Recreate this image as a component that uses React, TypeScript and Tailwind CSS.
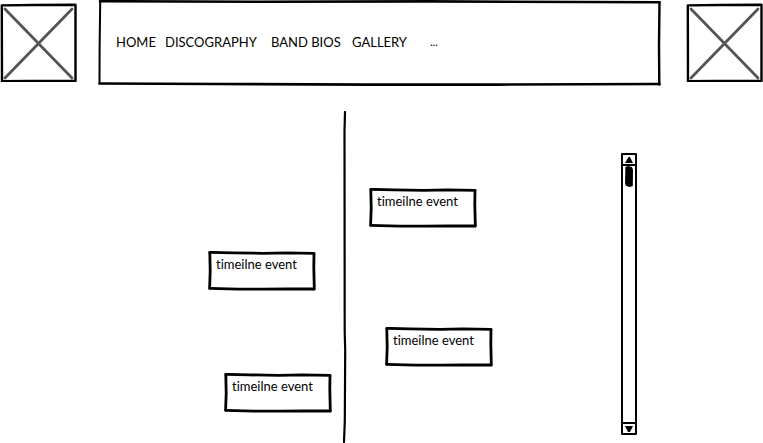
import React from "react";

const navItems = [
  { label: "HOME", style: "w-[37px] text-[13px]" },
  { label: "DISCOGRAPHY", style: "w-[94px] text-[13px]" },
  { label: "BAND BIOS", style: "w-[69px] text-[13px]" },
  { label: "GALLERY", style: "w-[66px] text-[13px]" },
  { label: "...", style: "w-3 text-[11px]" },
];

function ImagePlaceholder({ label }: { label: string }) {
  return (
    <svg role="img" aria-label={label} viewBox="0 0 77 80" className="h-20 w-[77px] shrink-0" fill="none">
      <path d="M5 7L72 76M72 7L5 76" stroke="#555" strokeWidth="2.8" strokeLinecap="round" />
      <path d="M1.8 3.4L34 3L75.5 2.8L75.5 79L30 79L2 79.2Z" stroke="#000" strokeWidth="2.4" strokeLinejoin="round" />
    </svg>
  );
}

function NavFrame() {
  return (
    <svg aria-hidden="true" viewBox="0 0 563 86" preserveAspectRatio="none" className="absolute inset-0 h-full w-full" fill="none" stroke="#000" strokeLinecap="round">
      <path d="M2 1.2L160 1.8L330 1.4L561.5 2.2" strokeWidth="2.6" />
      <path d="M2.2 2L1.6 50L1.5 83.5" strokeWidth="2" />
      <path d="M1.5 83.5L120 84L270 84.6L400 84.6L561.5 84" strokeWidth="2.6" />
      <path d="M561.5 2.5L561 45L561.3 84.5" strokeWidth="2.4" />
    </svg>
  );
}

function TimelineEvent({ className }: { className: string }) {
  return (
    <article className={`relative h-10 w-[108px] px-2 py-[3px] ${className}`}>
      <svg aria-hidden="true" viewBox="0 0 108 40" preserveAspectRatio="none" className="absolute inset-0 h-full w-full" fill="none" stroke="#000" strokeLinejoin="round" strokeLinecap="round">
        <path d="M1.8 1.3L25 1.9L55 2.3L78 1.8L106 2.4" strokeWidth="2.8" />
        <path d="M1.8 1.8L2.2 20L1.6 37.2" strokeWidth="2.8" />
        <path d="M1.8 37.4L30 38.2L55 38.2L80 38L106 38" strokeWidth="2.8" />
        <path d="M106 3L105.8 16L106.3 38" strokeWidth="2.8" />
      </svg>
      <p className="relative whitespace-nowrap text-[13px] leading-5">timeilne event</p>
    </article>
  );
}

function ScrollBar() {
  return (
    <div className="mt-[42px] flex h-[282px] w-4 shrink-0 flex-col rounded-[1px] border-2 border-black">
      <button type="button" aria-label="Scroll up" className="flex h-[11px] shrink-0 items-center justify-center border-b-2 border-black">
        <svg viewBox="0 0 8 6" className="h-1.5 w-2"><path d="M3.5 0H5L8 6H0Z" /></svg>
      </button>
      <div className="flex flex-1 justify-center">
        <svg aria-hidden="true" viewBox="0 0 8 21" className="h-[21px] w-2"><path d="M.4 1L3 0L7 1L8 4L7.8 20L5 21L1 20L0 17Z" /></svg>
      </div>
      <button type="button" aria-label="Scroll down" className="flex h-[11px] shrink-0 items-center justify-center border-t-2 border-black">
        <svg viewBox="0 0 8 6" className="h-1.5 w-2"><path d="M0 0H8L5 6H3Z" /></svg>
      </button>
    </div>
  );
}

export default function App() {
  return (
    <div className="bg-white font-['Lato','Open_Sans',sans-serif] text-black [font-variant-ligatures:none]">
      <header className="flex items-start">
        <div className="pt-0.5"><ImagePlaceholder label="Left band picture" /></div>
        <nav aria-label="Main" className="relative ml-[21px] mr-[25px] h-[86px] flex-1">
          <NavFrame />
          <ul className="relative flex h-[84px] items-center gap-3 px-[18px]">
            {navItems.map(({ label, style }) => (
              <li key={label} className={`whitespace-nowrap leading-5 ${style}`}>
                <a href="#">{label}</a>
              </li>
            ))}
          </ul>
        </nav>
        <div className="pt-0.5"><ImagePlaceholder label="Right band picture" /></div>
      </header>
      <main className="flex items-start pt-[25px]">
        <section aria-label="Timeline" className="flex flex-1 items-start">
          <div className="flex w-[343px] flex-col items-end gap-[82px] pt-[140px]">
            <TimelineEvent className="mr-[27px]" />
            <TimelineEvent className="mr-[11px]" />
          </div>
          <svg aria-hidden="true" viewBox="0 0 4 332" className="h-[332px] w-1 shrink-0" fill="none">
            <path d="M2 1L1.5 20L1.7 220L2.2 240L1.8 310L1 331" stroke="#000" strokeWidth="2.2" strokeLinecap="round" />
          </svg>
          <div className="flex flex-col items-start gap-[99px] pt-[77px]">
            <TimelineEvent className="ml-[22px]" />
            <TimelineEvent className="ml-[38px]" />
          </div>
        </section>
        <ScrollBar />
        <div className="w-[126px] shrink-0" />
      </main>
    </div>
  );
}
